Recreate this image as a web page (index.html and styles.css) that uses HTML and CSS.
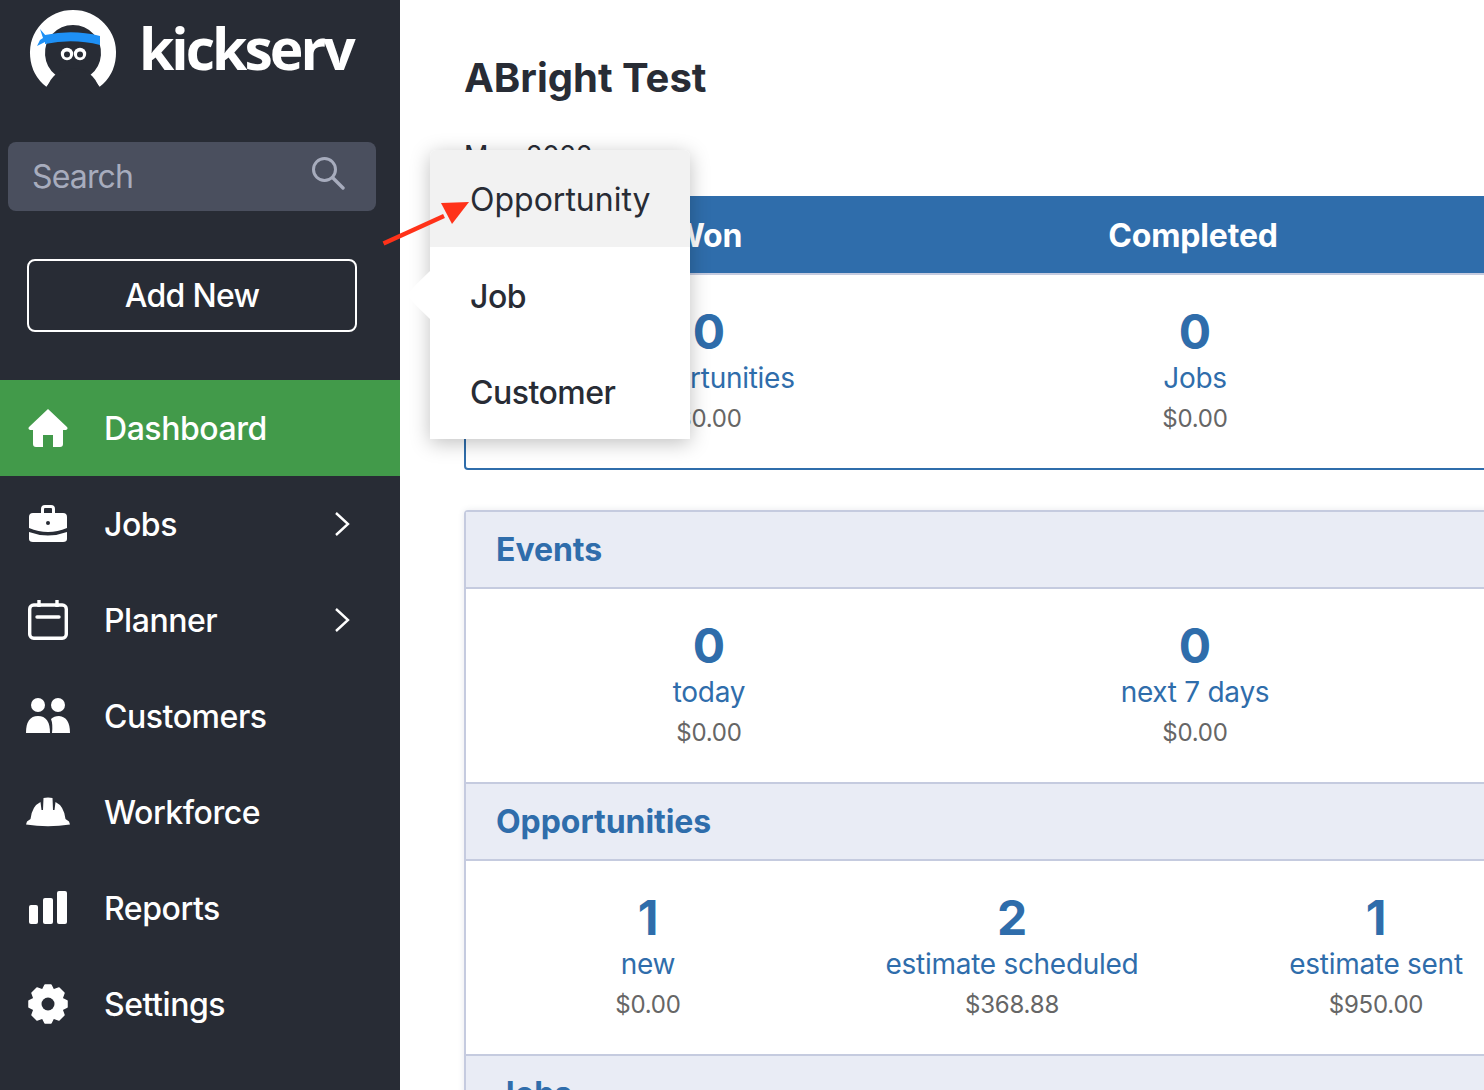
FILE: index.html
```html
<!DOCTYPE html>
<html lang="en">
<head>
<meta charset="utf-8">
<title>Kickserv Dashboard</title>
<link rel="stylesheet" href="styles.css">
</head>
<body>
<div class="app">
  <aside class="sidebar">
    <div class="brand">
      <svg class="logo-mark" viewBox="0 0 90 80" width="90" height="80" aria-hidden="true">
        <path d="M23 70.900 A35.500 35.500 0 1 1 67 70.900" fill="none" stroke="#fff" stroke-width="15"/>
        <circle cx="45" cy="85" r="27" fill="#282c35"/>
        <path d="M17 25 Q45 19 72 26 L72 35 Q45 28 17 34 Z" fill="#1e90f5"/>
        <path d="M12 19 L18 26 L17 32 L9 36 L12 30 L15 28 Z" fill="#1e90f5"/>
        <circle cx="39" cy="44" r="6.200" fill="#fff"/>
        <circle cx="52" cy="44" r="6.200" fill="#fff"/>
        <circle cx="39" cy="44.500" r="3" fill="#282c35"/>
        <circle cx="52" cy="44.500" r="3" fill="#282c35"/>
      </svg>
      <span class="wordmark">kickserv</span>
    </div>
    <div class="search">
      <span class="search-label">Search</span>
      <svg class="search-icon" viewBox="0 0 34 34" width="34" height="34" aria-hidden="true">
        <circle cx="13.500" cy="13.500" r="11" fill="none" stroke="currentColor" stroke-width="3"/>
        <path d="M21.500 21.500 L32 32" fill="none" stroke="currentColor" stroke-width="3.400" stroke-linecap="round"/>
      </svg>
    </div>
    <div class="add-new">Add New</div>
    <nav class="nav">
      <a class="nav-item active">
        <svg class="nav-icon" viewBox="0 0 40 40" aria-hidden="true"><path d="M20 1 L39 19 Q40.500 21 38 22 L35 22 L35 36 Q35 39 32 39 L25 39 L25 27 L15 27 L15 39 L8 39 Q5 39 5 36 L5 22 L2 22 Q-.500 21 1 19 Z" fill="#fff"/></svg>
        <span>Dashboard</span>
      </a>
      <a class="nav-item">
        <svg class="nav-icon" viewBox="0 0 40 40" aria-hidden="true"><path d="M13 9 V5 Q13 1 17 1 H23 Q27 1 27 5 V9 H24 V5 Q24 4 23 4 H17 Q16 4 16 5 V9 Z M5 9 H35 Q39 9 39 13 V24 Q20 32 1 24 V13 Q1 9 5 9 Z M1 28 Q20 35 39 28 V35 Q39 38 35 38 H5 Q1 38 1 35 Z" fill="#fff"/><circle cx="20" cy="19" r="2" fill="#282c35"/></svg>
        <span>Jobs</span>
        <svg class="chevron" viewBox="0 0 16 26" aria-hidden="true"><path d="M2 2 L14 13 L2 24" fill="none" stroke="#fff" stroke-width="2.400"/></svg>
      </a>
      <a class="nav-item">
        <svg class="nav-icon" viewBox="0 0 40 40" aria-hidden="true"><rect x="1.700" y="5" width="36.600" height="33.300" rx="4" fill="none" stroke="#fff" stroke-width="3.400"/><path d="M11 0 V7 M29 0 V7" stroke="#fff" stroke-width="3.400"/><path d="M9 17 H31" stroke="#fff" stroke-width="3.400" stroke-linecap="round"/></svg>
        <span>Planner</span>
        <svg class="chevron" viewBox="0 0 16 26" aria-hidden="true"><path d="M2 2 L14 13 L2 24" fill="none" stroke="#fff" stroke-width="2.400"/></svg>
      </a>
      <a class="nav-item">
        <svg class="nav-icon wide" viewBox="0 0 44 36" aria-hidden="true"><circle cx="12" cy="7" r="7" fill="#fff"/><circle cx="32" cy="7" r="7" fill="#fff"/><path d="M0 35 Q0 18 12 18 Q24 18 24 35 Z" fill="#fff"/><path d="M26 35 Q27 26 25 21 Q28 18 33 18 Q44 19 44 35 Z" fill="#fff"/></svg>
        <span>Customers</span>
      </a>
      <a class="nav-item">
        <svg class="nav-icon wide" viewBox="0 0 44 30" aria-hidden="true"><path d="M17.500 1 Q22 0 26.500 1 L27 13 L28.500 13 L29.500 5 Q38 9 39.500 22 L43 24.500 L44 27.500 Q22 31 0 27.500 L1 24.500 L4.500 22 Q6 9 14.500 5 L15.500 13 L17 13 Z" fill="#fff"/></svg>
        <span>Workforce</span>
      </a>
      <a class="nav-item">
        <svg class="nav-icon" viewBox="0 0 40 34" aria-hidden="true"><rect x="1" y="14" width="9" height="19" rx="2" fill="#fff"/><rect x="15" y="7" width="10" height="26" rx="2" fill="#fff"/><rect x="29" y="0" width="10" height="33" rx="2" fill="#fff"/></svg>
        <span>Reports</span>
      </a>
      <a class="nav-item">
        <svg class="nav-icon" viewBox="0 0 40 40" aria-hidden="true"><path d="M17 1 H23 L25.500 6 L31 4 L36 9 L34 14.500 L39 17 V23 L34 25.500 L36 31 L31 36 L25.500 34 L23 39 H17 L14.500 34 L9 36 L4 31 L6 25.500 L1 23 V17 L6 14.500 L4 9 L9 4 L14.500 6 Z" fill="#fff" stroke="#fff" stroke-width="1.500" stroke-linejoin="round"/><circle cx="20" cy="20" r="6.500" fill="#282c35"/></svg>
        <span>Settings</span>
      </a>
    </nav>
  </aside>

  <main class="main">
    <h1 class="title">ABright Test</h1>
    <p class="period">May 2022</p>

    <section class="panel panel-primary">
      <div class="cols cols-3 head-blue">
        <div>Won</div>
        <div>Completed</div>
      </div>
      <div class="cols cols-3 body">
        <div class="stat"><b>0</b><a>opportunities</a><small>$0.00</small></div>
        <div class="stat"><b>0</b><a>Jobs</a><small>$0.00</small></div>
      </div>
    </section>

    <section class="panel panel-stack">
      <h2 class="head-light">Events</h2>
      <div class="cols cols-3 body">
        <div class="stat"><b>0</b><a>today</a><small>$0.00</small></div>
        <div class="stat"><b>0</b><a>next 7 days</a><small>$0.00</small></div>
      </div>
      <h2 class="head-light">Opportunities</h2>
      <div class="cols cols-4 body">
        <div class="stat"><b>1</b><a>new</a><small>$0.00</small></div>
        <div class="stat"><b>2</b><a>estimate scheduled</a><small>$368.88</small></div>
        <div class="stat"><b>1</b><a>estimate sent</a><small>$950.00</small></div>
      </div>
      <h2 class="head-light">Jobs</h2>
    </section>
  </main>
</div>

<div class="menu">
  <a class="menu-item hover">Opportunity</a>
  <a class="menu-item">Job</a>
  <a class="menu-item">Customer</a>
</div>
<div class="menu-caret"></div>
<svg class="annotation" viewBox="0 0 100 50" width="100" height="50" aria-hidden="true">
  <path d="M1.500 43.500 L62 16" stroke="#ff3219" stroke-width="4.500"/>
  <path d="M87 2 L59 3 L70 24 Z" fill="#ff3219"/>
</svg>
</body>
</html>
```

FILE: styles.css
```css
* { box-sizing: border-box; }

html, body {
  margin: 0;
  height: 100%;
  overflow: hidden;
  background: #fff;
  font-family: Inter, "Liberation Sans", sans-serif;
}

.app {
  display: flex;
  height: 1090px;
  overflow: hidden;
}

/* Sidebar */
.sidebar {
  flex: 0 0 400px;
  background: #282c35;
  color: #fff;
  display: flex;
  flex-direction: column;
}

.brand {
  height: 142px;
  padding: 10px 0 0 28px;
  display: flex;
  align-items: flex-start;
  gap: 21px;
}

.logo-mark { flex: none; }

.wordmark {
  font-family: "Open Sans", sans-serif;
  font-weight: 700;
  font-size: 57px;
  line-height: 76px;
  letter-spacing: -3px;
}

.search {
  margin-left: 8px;
  width: 368px;
  height: 69px;
  border-radius: 8px;
  background: #4a4f5e;
  color: #a7acbd;
  display: flex;
  align-items: center;
  justify-content: space-between;
  padding: 0 31px 0 24px;
  font-size: 32px;
  letter-spacing: -.85px;
}

.search-icon { margin-top: -8px; }

.add-new {
  margin: 48px 0 48px 27px;
  width: 330px;
  height: 73px;
  border: 2px solid #fff;
  border-radius: 8px;
  display: flex;
  align-items: center;
  justify-content: center;
  font-size: 32px;
  font-weight: 500;
  letter-spacing: -.7px;
}

.nav { display: flex; flex-direction: column; }

.nav-item {
  height: 96px;
  padding-left: 28px;
  display: flex;
  align-items: center;
  font-size: 32px;
  font-weight: 500;
  letter-spacing: -.45px;
  position: relative;
}

.nav-item span { padding-top: 1px; }

.nav-item.active { background: #429a4a; }

.nav-icon {
  flex: none;
  width: 40px;
  height: 40px;
  margin-right: 36px;
}

.nav-icon.wide {
  width: 44px;
  margin-left: -2px;
  margin-right: 34px;
}

.chevron {
  width: 16px;
  height: 26px;
  margin-left: auto;
  margin-right: 50px;
}

/* Main */
.main {
  flex: 1;
  min-width: 0;
  padding: 54px 0 0 64px;
  overflow: hidden;
}

.title {
  margin: 0;
  font-size: 40px;
  line-height: 48px;
  font-weight: 700;
  color: #282c35;
}

.period {
  margin: 0;
  height: 58px;
  padding-top: 36px;
  font-size: 27px;
  line-height: 36px;
  color: #282c35;
  box-sizing: content-box;
}

.panel { width: 1459px; }

.cols { display: grid; }
.cols-3 { grid-template-columns: repeat(3, 486px); }
.cols-4 { grid-template-columns: repeat(4, 364px); }

.panel-primary {
  border: 2px solid #2f6dab;
  border-top: 0;
  border-radius: 0 0 4px 4px;
}

.head-blue {
  height: 79px;
  margin: 0 -2px;
  background: #2f6dab;
  border-bottom: 2px solid #c5cbdf;
  color: #fff;
  font-size: 32px;
  font-weight: 700;
  letter-spacing: -.15px;
  line-height: 80px;
  text-align: center;
}

.body { height: 193px; padding-top: 31px; }

.stat {
  display: flex;
  flex-direction: column;
  align-items: center;
  color: #2f6dab;
}

.stat b {
  font-size: 48px;
  line-height: 52px;
  font-weight: 700;
}

.stat a {
  font-size: 28px;
  line-height: 40px;
  letter-spacing: -.28px;
}

.stat small {
  font-size: 24px;
  line-height: 42px;
  letter-spacing: -.2px;
  color: #666;
}

.panel-stack {
  margin-top: 40px;
  border: 2px solid #c5cbdf;
  border-radius: 4px 4px 0 0;
  box-shadow: 0 0 6px rgba(60, 70, 110, .12);
}

.head-light {
  margin: 0;
  height: 79px;
  padding: 0 30px;
  background: #e9ecf5;
  border-bottom: 2px solid #c5cbdf;
  border-top: 2px solid #c5cbdf;
  color: #2f6dab;
  font-size: 32px;
  line-height: 76px;
  font-weight: 700;
  letter-spacing: -.05px;
}

.head-light:first-child { border-top: 0; height: 77px; }

/* Popover */
.menu {
  position: absolute;
  left: 430px;
  top: 150px;
  width: 260px;
  background: #fff;
  border-radius: 6px 6px 0 0;
  box-shadow: 0 4px 20px rgba(0, 0, 0, .25);
  overflow: hidden;
}

.menu-item {
  display: flex;
  align-items: center;
  height: 96px;
  padding: 2px 0 0 40px;
  font-size: 32px;
  font-weight: 500;
  letter-spacing: -.5px;
  color: #282c35;
}

.menu-item.hover { background: #f2f2f2; font-weight: 400; letter-spacing: 0; height: 97px; padding-top: 1px; }

.menu-caret {
  position: absolute;
  left: 405px;
  top: 271px;
  width: 0;
  height: 0;
  border-top: 24px solid transparent;
  border-bottom: 24px solid transparent;
  border-right: 25px solid #fff;
}

.annotation {
  position: absolute;
  left: 382px;
  top: 200px;
}
```
